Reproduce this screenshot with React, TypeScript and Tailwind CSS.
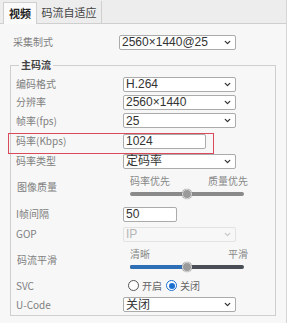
import { ChevronDown } from "lucide-react";

const cjk = "font-['Noto_Sans_CJK_SC',sans-serif]";
const latin = "font-['Liberation_Sans','Noto_Sans_CJK_SC',sans-serif]";

const Select = ({ value, disabled = false, w = "w-[113px]" }: { value: string; disabled?: boolean; w?: string }) => (
  <div
    className={`${w} h-[15px] flex items-center justify-between pl-[2px] pr-[3px] rounded-[2px] border ${
      disabled ? "border-[#e2e2e2] bg-[#f7f7f7] text-[#b5b5b5]" : "border-[#ababab] bg-white text-[#333]"
    } ${latin} text-[12px] leading-none`}
  >
    <span>{value}</span>
    <ChevronDown className={`w-[9px] h-[9px] ${disabled ? "text-[#c8c8c8]" : "text-[#333]"}`} strokeWidth={3.5} />
  </div>
);

const Input = ({ value, w }: { value: string; w: string }) => (
  <div className={`${w} h-[15px] flex items-center pl-[2px] border border-[#ababab] rounded-[2px] bg-white ${latin} text-[12px] text-[#333] leading-none`}>
    {value}
  </div>
);

const Label = ({ children, indent = false }: { children: React.ReactNode; indent?: boolean }) => (
  <div className={`w-[107px] shrink-0 ${indent ? "pl-[1px]" : ""} ${cjk} text-[10px] text-[#808080] leading-none`}>{children}</div>
);

const Slider = ({ left, right, pos, blue = false }: { left: string; right: string; pos: number; blue?: boolean }) => (
  <div className="w-[118px] ml-[7px] flex flex-col">
    <div className={`flex justify-between ${cjk} text-[10px] text-[#888] leading-none`}>
      <span>{left}</span>
      <span>{right}</span>
    </div>
    <div className="relative h-[10px] mt-[3px] w-[114px]">
      <div className={`absolute left-0 right-0 top-[3px] h-[4px] rounded-full ${blue ? "bg-[#4a4f57]" : "bg-[#8a8a8a]"}`} />
      {blue && <div className="absolute left-0 top-[3px] h-[4px] rounded-l-full bg-[#2f6fb5]" style={{ width: pos }} />}
      <div
        className="absolute top-0 w-[10px] h-[10px] rounded-full bg-[#9a9a9a] border border-[#d8d8d8] shadow-[0_0_1px_#666]"
        style={{ left: pos - 5 }}
      />
    </div>
  </div>
);

export default function App() {
  return (
    <div className="w-[287px] h-[323px] bg-[#f7f7f7] relative overflow-hidden border-r border-[#d6d6d6]">
      {/* tabs */}
      <div className="h-[24px] bg-[#ededed] border-b border-[#cfcfcf] flex items-end pl-[3px]">
        <div className={`h-[22px] w-[34px] flex items-center justify-center bg-[#fafafa] border border-b-0 border-[#cfcfcf] -mb-px ${cjk} text-[11px] font-bold text-[#222]`}>
          视频
        </div>
        <div className={`h-[22px] w-[65px] flex items-center justify-center border-r border-[#cfcfcf] ${cjk} text-[11px] text-[#444]`}>
          码流自适应
        </div>
      </div>

      <div className="pt-[10px] flex items-center h-[26px]">
        <div className={`w-[119px] pl-[13px] ${cjk} text-[10px] text-[#808080] leading-none`}>采集制式</div>
        <Select value="2560×1440@25" w="w-[117px]" />
      </div>

      <fieldset className="mx-[10px] mt-[8px] border border-[#cfcfcf] pl-[5px] pb-[1px]">
        <legend className={`ml-[3px] px-[2px] ${cjk} text-[10px] font-bold text-[#444] leading-[14px]`}>主码流</legend>
        <div className="pt-[3px]" />
        <div className="h-[18px] flex items-center">
          <Label>编码格式</Label>
          <Select value="H.264" />
        </div>
        <div className="h-[18px] flex items-center">
          <Label>分辨率</Label>
          <Select value="2560×1440" />
        </div>
        <div className="h-[19px] flex items-center">
          <Label>帧率(fps)</Label>
          <Select value="25" />
        </div>
        <div className="h-[22px] flex items-center">
          <Label>码率(Kbps)</Label>
          <Input value="1024" w="w-[83px]" />
        </div>
        <div className="h-[18px] flex items-center">
          <Label>码率类型</Label>
          <Select value="定码率" />
        </div>
        <div className="h-[34px] flex items-center">
          <Label indent>图像质量</Label>
          <Slider left="码率优先" right="质量优先" pos={57} />
        </div>
        <div className="h-[20px] flex items-center">
          <Label>I帧间隔</Label>
          <Input value="50" w="w-[54px]" />
        </div>
        <div className="h-[20px] flex items-center">
          <Label>GOP</Label>
          <Select value="IP" disabled />
        </div>
        <div className="h-[32px] flex items-center">
          <Label indent>码流平滑</Label>
          <Slider left="清晰" right="平滑" pos={57} blue />
        </div>
        <div className="h-[19px] flex items-center">
          <Label>SVC</Label>
          <div className={`ml-[5px] flex items-center ${cjk} text-[10px] text-[#666] leading-none`}>
            <span className="w-[11px] h-[11px] rounded-full border border-[#555] bg-white" />
            <span className="ml-[3px]">开启</span>
            <span className="ml-[4px] w-[11px] h-[11px] rounded-full border border-[#1a6fd1] bg-white flex items-center justify-center">
              <span className="w-[6px] h-[6px] rounded-full bg-[#1a6fd1]" />
            </span>
            <span className="ml-[3px]">关闭</span>
          </div>
        </div>
        <div className="h-[19px] flex items-center">
          <Label>U-Code</Label>
          <Select value="关闭" />
        </div>
      </fieldset>

      {/* highlight box */}
      <div className="absolute left-[8px] top-[133px] w-[206px] h-[21px] border-[1.5px] border-[#d94a5c]" />
    </div>
  );
}
